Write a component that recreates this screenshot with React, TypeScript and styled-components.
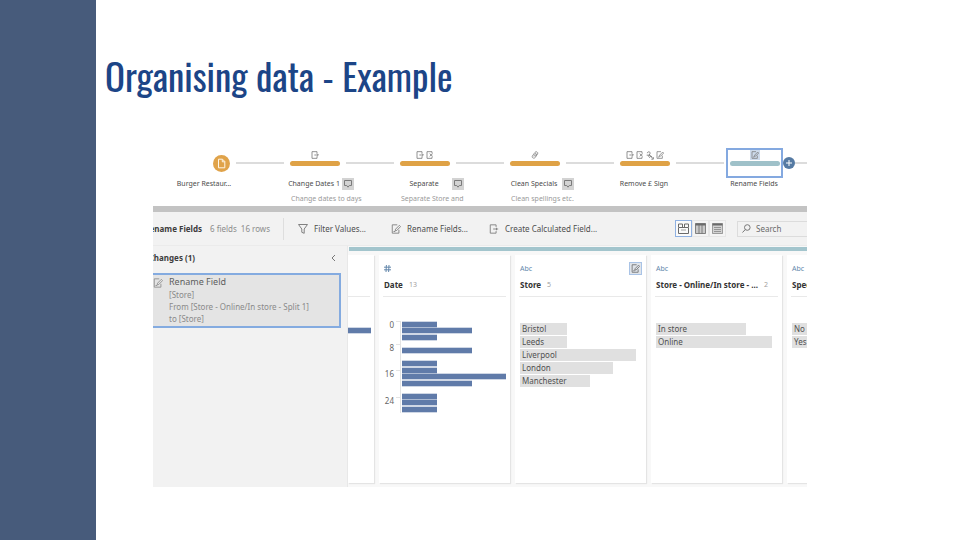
import React from "react";
import styled, { createGlobalStyle } from "styled-components";

const GlobalStyle = createGlobalStyle`
  *, *::before, *::after { box-sizing: border-box; }
  body {
    margin: 0;
    background: #ffffff;
    font-family: "Noto Sans", "Open Sans", sans-serif;
  }
  h1, h2, h3, p, ul, ol, figure { margin: 0; padding: 0; }
  ul, ol { list-style: none; }
  button, input { font-family: inherit; }
  svg { display: block; flex: none; }
`;

const Slide = styled.div`
  display: flex;
  min-height: 100vh;
`;

const SideBand = styled.aside`
  flex: none;
  width: 10%;
  background: #475b7b;
`;

const Content = styled.main`
  flex: 1;
  min-width: 0;
  overflow: hidden;
`;

const Title = styled.h1`
  padding: 51px 9px 0;
  color: #1c4587;
  font-family: "Oswald", "Noto Sans ExtraCondensed", "Open Sans Condensed", "Roboto Condensed", "Liberation Sans Narrow", sans-serif;
  font-size: 37px;
  font-weight: 400;
  line-height: 50px;
  white-space: nowrap;
`;

const Figure = styled.figure`
  margin: 47px 153px 53px 57px;
  overflow: hidden;
`;

/* Flow of preparation steps */

const Flow = styled.ol`
  display: flex;
  padding-left: 27px;
  height: 58px;
`;

const Step = styled.li`
  position: relative;
  flex: none;
  width: 110px;
`;

const StepIcons = styled.div`
  display: flex;
  justify-content: center;
  align-items: center;
  gap: 2px;
  width: 50px;
  height: 12px;
  padding-top: 2px;
  color: #777777;
`;

const IconHighlight = styled.span<{ $active?: boolean }>`
  padding: 1px;
  background: ${(p) => (p.$active ? "#cddaeb" : "transparent")};
`;

const Track = styled.div`
  display: flex;
  align-items: center;
  height: 6px;
`;

const TrackBar = styled.div<{ $color: string }>`
  display: flex;
  justify-content: flex-end;
  align-items: center;
  flex: none;
  width: 50px;
  height: 5px;
  border-radius: 3px;
  background: ${(p) => p.$color};
`;

const Connector = styled.div<{ $wide?: boolean }>`
  flex: none;
  width: ${(p) => (p.$wide ? "62px" : "48px")};
  height: 2px;
  margin-left: ${(p) => (p.$wide ? "0" : "6px")};
  background: #dcdcdc;
`;

const AddButton = styled.button`
  display: grid;
  place-items: center;
  flex: none;
  width: 12px;
  height: 12px;
  margin-left: 3px;
  padding: 0;
  border: 0;
  border-radius: 50%;
  background: #557aa3;
  color: #ffffff;
`;

const LabelRow = styled.div`
  display: flex;
  align-items: center;
  gap: 4px;
  height: 12px;
  margin-top: 12px;
`;

const StepLabel = styled.span`
  display: flex;
  justify-content: center;
  width: 48px;
  color: #4c4c4c;
  font-size: 7px;
  line-height: 12px;
  white-space: nowrap;
`;

const CommentButton = styled.button`
  display: grid;
  place-items: center;
  width: 12px;
  height: 12px;
  padding: 0;
  border: 0;
  background: #d3d3d3;
  color: #7c7c7c;
`;

const StepNote = styled.p`
  margin-top: 3px;
  padding-left: 1px;
  color: #9a9a9a;
  font-size: 7px;
  line-height: 12px;
  white-space: nowrap;
`;

const SelectionFrame = styled.div`
  position: absolute;
  inset: 0 57px 28px -4px;
  border: 2px solid #84a9e0;
`;

const Splitter = styled.div`
  height: 6px;
  background: #c3c3c3;
`;

/* Toolbar */

const Toolbar = styled.div`
  display: flex;
  align-items: center;
  height: 34px;
  background: #f2f2f2;
  border-bottom: 1px solid #ebebeb;
  color: #4e4e4e;
  font-size: 8px;
  line-height: 12px;
  white-space: nowrap;
`;

const StepName = styled.h2`
  display: flex;
  justify-content: flex-end;
  flex: none;
  width: 49px;
  color: #3c3c3c;
  font-size: 8px;
  font-weight: 700;
  line-height: 12px;
`;

const Summary = styled.span`
  display: flex;
  flex: none;
  gap: 4px;
  width: 73px;
  margin-left: 8px;
  color: #8c8c8c;
`;

const Tool = styled.button<{ $width: number }>`
  display: flex;
  align-items: center;
  gap: 6px;
  flex: none;
  width: ${(p) => p.$width}px;
  padding: 0;
  border: 0;
  background: none;
  color: #4e4e4e;
  font-size: 8px;
  line-height: 12px;
  white-space: nowrap;
  svg { color: #808080; }
`;

const Tools = styled.div`
  display: flex;
  align-items: center;
  flex: 1 0 auto;
  height: 22px;
  padding-left: 14px;
  border-left: 1px solid #dedede;
`;

const ViewSwitch = styled.div`
  display: flex;
  flex: none;
  height: 17px;
  box-shadow: inset 0 0 0 1px #e0e0e0;
`;

const ViewButton = styled.button<{ $active?: boolean }>`
  display: grid;
  place-items: center;
  width: 17px;
  padding: 0;
  border: 1px solid ${(p) => (p.$active ? "#8fb1e2" : "#e6e6e6")};
  background: ${(p) => (p.$active ? "#fafafa" : "#f4f4f4")};
  color: #6a6a6a;
`;

const SearchBox = styled.label`
  display: flex;
  align-items: center;
  gap: 5px;
  flex: none;
  width: 76px;
  height: 16px;
  margin: 0 -6px 0 11px;
  padding-left: 4px;
  border: 1px solid #dcdcdc;
  color: #777777;
`;

const SearchInput = styled.input`
  width: 52px;
  padding: 0;
  border: 0;
  outline: 0;
  background: none;
  font-size: 8px;
  line-height: 12px;
  &::placeholder { color: #6a6a6a; opacity: 1; }
`;

/* Lower workspace */

const Workspace = styled.div`
  display: flex;
  min-height: 241px;
`;

const ChangesPanel = styled.section`
  flex: none;
  width: 195px;
  background: #f2f2f2;
  border-right: 1px solid #e8e8e8;
`;

const ChangesHead = styled.div`
  display: flex;
  align-items: center;
  justify-content: space-between;
  height: 27px;
  padding: 0 11px 3px 0;
`;

const ChangesTitle = styled.h2`
  display: flex;
  justify-content: flex-end;
  width: 42px;
  color: #3c3c3c;
  font-size: 8px;
  font-weight: 700;
  line-height: 12px;
  white-space: nowrap;
`;

const CollapseButton = styled.button`
  padding: 0;
  border: 0;
  background: none;
  color: #777777;
`;

const Change = styled.article`
  display: flex;
  gap: 6px;
  width: 188px;
  height: 55px;
  border: 2px solid #84abe0;
  border-left: 0;
  background: #e4e4e4;
  color: #8a8a8a;
  font-size: 8px;
  line-height: 12px;
  white-space: nowrap;
`;

const ChangeIcon = styled.span`
  padding-top: 3px;
  color: #909090;
`;

const ChangeTitle = styled.h3`
  color: #5e5e5e;
  font-size: 9px;
  font-weight: 400;
  line-height: 14px;
`;

const Profile = styled.section`
  flex: 1;
  min-width: 0;
  overflow: hidden;
  background: #f8f8f8;
`;

const StepStripe = styled.div`
  height: 4px;
  margin: 1px 0 4px 1px;
  background: #a3c5cd;
`;

const Cards = styled.div`
  display: flex;
  gap: 5px;
`;

const Card = styled.article<{ $cut?: boolean }>`
  flex: none;
  width: ${(p) => (p.$cut ? "26px" : "131px")};
  height: 228px;
  background: #ffffff;
  box-shadow: 1px 1px 1px #e4e4e4;
`;

const CardHead = styled.header<{ $cut?: boolean }>`
  height: 42px;
  margin: 0 4px 0 ${(p) => (p.$cut ? "0" : "4px")};
  padding: 6px 0 0 1px;
  border-bottom: 1px solid #e9e9e9;
`;

const TypeRow = styled.div`
  display: flex;
  align-items: center;
  justify-content: space-between;
  height: 14px;
  color: #6387ab;
  font-size: 7px;
`;

const EditBadge = styled.button`
  display: grid;
  place-items: center;
  width: 13px;
  height: 13px;
  padding: 0;
  border: 1px solid #a9c3e6;
  background: #dfe4ea;
  color: #6c6c6c;
`;

const FieldName = styled.h3`
  display: flex;
  align-items: center;
  gap: 6px;
  height: 20px;
  color: #333333;
  font-size: 8px;
  font-weight: 700;
  line-height: 12px;
  white-space: nowrap;
`;

const Count = styled.span`
  color: #a0a0a0;
  font-size: 7px;
  font-weight: 400;
`;

const Values = styled.ul`
  display: grid;
  gap: 1px;
  padding: 26px 0 0 5px;
`;

const Value = styled.li<{ $width: number }>`
  width: ${(p) => p.$width}px;
  height: 12px;
  padding-left: 2px;
  background: #e0e0e0;
  color: #505050;
  font-size: 8px;
  line-height: 12px;
  white-space: nowrap;
`;

const Chart = styled.svg`
  margin-top: 19px;
  font-family: "Noto Sans", sans-serif;
  font-size: 8px;
  fill: #666666;
`;

const EditIcon = ({ size = 9 }: { size?: number }) => (
  <svg width={size} height={size} viewBox="0 0 12 12" fill="none" stroke="currentColor" strokeWidth="1.1">
    <path d="M7.500 1H1.500v10h8V7" />
    <path d="M5 8.200l.5-2L10 1.600l1.500 1.500L7 7.700z" />
    <path d="M3 9h2" />
  </svg>
);

const FieldIcon = ({ size = 9, removed }: { size?: number; removed?: boolean }) => (
  <svg width={size} height={size} viewBox="0 0 12 12" fill="none" stroke="currentColor" strokeWidth="1.2">
    {removed ? (
      <path d="M9 3.500V1H1.500v10H9V8.500M5.500 4l4.500 4M10 4L5.500 8" />
    ) : (
      <path d="M9 4V1H1.500v10H9V8M5 6h6M9.200 4.200L11 6 9.200 7.800" />
    )}
  </svg>
);

const ExportIcon = () => (
  <svg width="10" height="10" viewBox="0 0 12 12" fill="none" stroke="currentColor" strokeWidth="1.1">
    <path d="M8.500 3.500V1h-7v10h7V8.500M5 6h6M9 4.500v3" />
  </svg>
);

const ClipIcon = () => (
  <svg width="8" height="8" viewBox="0 0 12 12" fill="none" stroke="currentColor" strokeWidth="1.1">
    <path d="M2 7.500L6 2c1.500-2 5-.5 4 2.200L6.500 9.500C5 12 .8 10.500 2 7.500zM4 8l3.500-5M6 8.500L9 4" />
  </svg>
);

const TextIcon = () => (
  <svg width="8" height="9" viewBox="0 0 12 13" fill="none" stroke="currentColor" strokeWidth="1.300">
    <path d="M2 3c0-3 5-2.500 4 .5C5.500 5 4 7 4 8.500M1 6h5l4 5M5 10c2-3 3-3 4-1M8 12h3V9" />
  </svg>
);

const PageIcon = () => (
  <svg width="17" height="17" viewBox="0 0 17 17" fill="none">
    <circle cx="8.500" cy="8.500" r="8.500" fill="#e0a34a" />
    <path d="M5.500 4.200h4l2.300 2.300v6.300H5.500zM9.300 4.500v2.300h2.400" stroke="#fff6e6" strokeWidth="1" />
  </svg>
);

const CommentIcon = () => (
  <svg width="10" height="10" viewBox="0 0 10 10" fill="none" stroke="currentColor" strokeWidth="1">
    <path d="M1.500 1.500h7v5H6.300L5 8.200 3.700 6.500H1.500z" />
  </svg>
);

const PlusIcon = () => (
  <svg width="8" height="8" viewBox="0 0 8 8" stroke="currentColor" strokeWidth="1">
    <path d="M4 1v6M1 4h6" />
  </svg>
);

const FunnelIcon = () => (
  <svg width="10" height="10" viewBox="0 0 10 10" fill="none" stroke="currentColor" strokeWidth="1">
    <path d="M.5.500h9L6.200 5v4.300L3.800 8.300V5z" />
  </svg>
);

const SearchIcon = () => (
  <svg width="9" height="9" viewBox="0 0 9 9" fill="none" stroke="currentColor" strokeWidth="1">
    <circle cx="5.300" cy="3.500" r="2.800" />
    <path d="M3.300 5.500L.5 8.500" />
  </svg>
);

const ChevronIcon = () => (
  <svg width="5" height="8" viewBox="0 0 5 8" fill="none" stroke="currentColor" strokeWidth="1">
    <path d="M4 1L1 4l3 3" />
  </svg>
);

const HashIcon = () => (
  <svg width="7" height="7" viewBox="0 0 7 7" fill="none" stroke="currentColor" strokeWidth="1">
    <path d="M2.400 0L2 7M5 0l-.4 7M0 2.200h7M0 4.800h7" />
  </svg>
);

const CardsViewIcon = () => (
  <svg width="11" height="11" viewBox="0 0 11 11" fill="none" stroke="currentColor" strokeWidth="1">
    <path d="M.5 4V1h4v3M6.500 4V1h4v3M.5 4.500h10v6H.5z" />
    <path d="M3 7h5" strokeWidth=".6" />
  </svg>
);

const GridViewIcon = () => (
  <svg width="11" height="11" viewBox="0 0 11 11" fill="none" stroke="currentColor" strokeWidth=".8">
    <path d="M.5.500h10v10H.5z" fill="#c9c9c9" />
    <path d="M4 2v8.500M7 2v8.500" />
    <path d="M.5 1.500h10" strokeWidth="2" />
  </svg>
);

const ListViewIcon = () => (
  <svg width="11" height="11" viewBox="0 0 11 11" fill="none" stroke="currentColor" strokeWidth=".6">
    <path d="M.5.500h10v10H.5z" fill="#d2d2d2" />
    <path d="M2 4.500h7M2 6.500h7M2 8.500h7" />
    <path d="M.5 1.500h10" strokeWidth="2" />
  </svg>
);

const ORANGE = "#dfa246";
const TEAL = "#9fc1c9";

type StepData = { label: string; note?: string; comment?: boolean; icons: React.ReactNode };

const steps: StepData[] = [
  { label: "Change Dates 1", note: "Change dates to days", comment: true, icons: <FieldIcon size={8} /> },
  { label: "Separate", note: "Separate Store and", comment: true, icons: <><FieldIcon size={8} /><FieldIcon size={8} removed /></> },
  { label: "Clean Specials", note: "Clean spellings etc.", comment: true, icons: <ClipIcon /> },
  { label: "Remove £ Sign", icons: <><FieldIcon size={8} /><FieldIcon size={8} removed /><TextIcon /><EditIcon size={8} /></> },
];

const histogram = [
  [5, 35], [11, 70], [18, 35], [31, 70], [44, 35], [51, 35], [57, 104], [64, 70], [77, 35], [83, 35], [90, 35],
];
const ticks: [string, number][] = [["0", 4], ["8", 27], ["16", 53], ["24", 80]];

type FieldCardProps = { name: string; count?: number; edited?: boolean; values: [string, number][] };

const FieldCard = ({ name, count, edited, values }: FieldCardProps) => (
  <Card>
    <CardHead>
      <TypeRow>
        Abc
        {edited && <EditBadge aria-label="Edited field"><EditIcon /></EditBadge>}
      </TypeRow>
      <FieldName>{name}<Count>{count}</Count></FieldName>
    </CardHead>
    <Values>
      {values.map(([label, width]) => <Value key={label} $width={width}>{label}</Value>)}
    </Values>
  </Card>
);

export default function App() {
  return (
    <Slide>
      <GlobalStyle />
      <SideBand />
      <Content>
        <Title>Organising data - Example</Title>
        <Figure>
          <Flow>
            <Step>
              <StepIcons />
              <Track>
                <TrackBar $color="transparent"><PageIcon /></TrackBar>
                <Connector />
              </Track>
              <LabelRow><StepLabel>Burger Restaur...</StepLabel></LabelRow>
            </Step>
            {steps.map((s) => (
              <Step key={s.label}>
                <StepIcons>{s.icons}</StepIcons>
                <Track><TrackBar $color={ORANGE} /><Connector /></Track>
                <LabelRow>
                  <StepLabel>{s.label}</StepLabel>
                  {s.comment && <CommentButton aria-label={`Comment on ${s.label}`}><CommentIcon /></CommentButton>}
                </LabelRow>
                {s.note && <StepNote>{s.note}</StepNote>}
              </Step>
            ))}
            <Step>
              <SelectionFrame />
              <StepIcons><IconHighlight $active><EditIcon size={8} /></IconHighlight></StepIcons>
              <Track>
                <TrackBar $color={TEAL} />
                <AddButton aria-label="Add step"><PlusIcon /></AddButton>
                <Connector $wide />
              </Track>
              <LabelRow><StepLabel>Rename Fields</StepLabel></LabelRow>
            </Step>
          </Flow>
          <Splitter />
          <Toolbar>
            <StepName>Rename Fields</StepName>
            <Summary><span>6 fields</span><span>16 rows</span></Summary>
            <Tools>
              <Tool $width={93}><FunnelIcon />Filter Values...</Tool>
              <Tool $width={98}><EditIcon size={10} />Rename Fields...</Tool>
              <Tool $width={109}><ExportIcon />Create Calculated Field...</Tool>
            </Tools>
            <ViewSwitch>
              <ViewButton $active aria-label="Profile view"><CardsViewIcon /></ViewButton>
              <ViewButton aria-label="Grid view"><GridViewIcon /></ViewButton>
              <ViewButton aria-label="List view"><ListViewIcon /></ViewButton>
            </ViewSwitch>
            <SearchBox>
              <SearchIcon />
              <SearchInput type="text" placeholder="Search" aria-label="Search" />
            </SearchBox>
          </Toolbar>
          <Workspace>
            <ChangesPanel>
              <ChangesHead>
                <ChangesTitle>Changes (1)</ChangesTitle>
                <CollapseButton aria-label="Collapse changes"><ChevronIcon /></CollapseButton>
              </ChangesHead>
              <Change>
                <ChangeIcon><EditIcon size={10} /></ChangeIcon>
                <div>
                  <ChangeTitle>Rename Field</ChangeTitle>
                  <p>[Store]</p>
                  <p>From [Store - Online/In store - Split 1]</p>
                  <p>to [Store]</p>
                </div>
              </Change>
            </ChangesPanel>
            <Profile>
              <StepStripe />
              <Cards>
                <Card $cut>
                  <CardHead $cut />
                  <Chart width="23" height="110"><rect x="0" y="11.700" width="23" height="5.600" fill="#607ba9" /></Chart>
                </Card>
                <Card>
                  <CardHead>
                    <TypeRow><HashIcon /></TypeRow>
                    <FieldName>Date<Count>13</Count></FieldName>
                  </CardHead>
                  <Chart width="131" height="110" role="img" aria-label="Distribution of Date">
                    <path d="M21.500 5v92" stroke="#e4e4e4" />
                    {ticks.map(([label, y]) => (
                      <React.Fragment key={label}>
                        <text x="15" y={y + 8} textAnchor="end">{label}</text>
                        <path d={`M17 ${y + 1.500}h4`} stroke="#e4e4e4" />
                      </React.Fragment>
                    ))}
                    {histogram.map(([y, width]) => (
                      <rect key={y} x="23" y={y + 0.7} width={width} height="5.600" fill="#607ba9" />
                    ))}
                  </Chart>
                </Card>
                <FieldCard name="Store" count={5} edited values={[["Bristol", 47], ["Leeds", 47], ["Liverpool", 116], ["London", 93], ["Manchester", 70]]} />
                <FieldCard name="Store - Online/In store - ..." count={2} values={[["In store", 90], ["Online", 116]]} />
                <FieldCard name="Spec" values={[["No", 90], ["Yes", 116]]} />
              </Cards>
            </Profile>
          </Workspace>
        </Figure>
      </Content>
    </Slide>
  );
}
